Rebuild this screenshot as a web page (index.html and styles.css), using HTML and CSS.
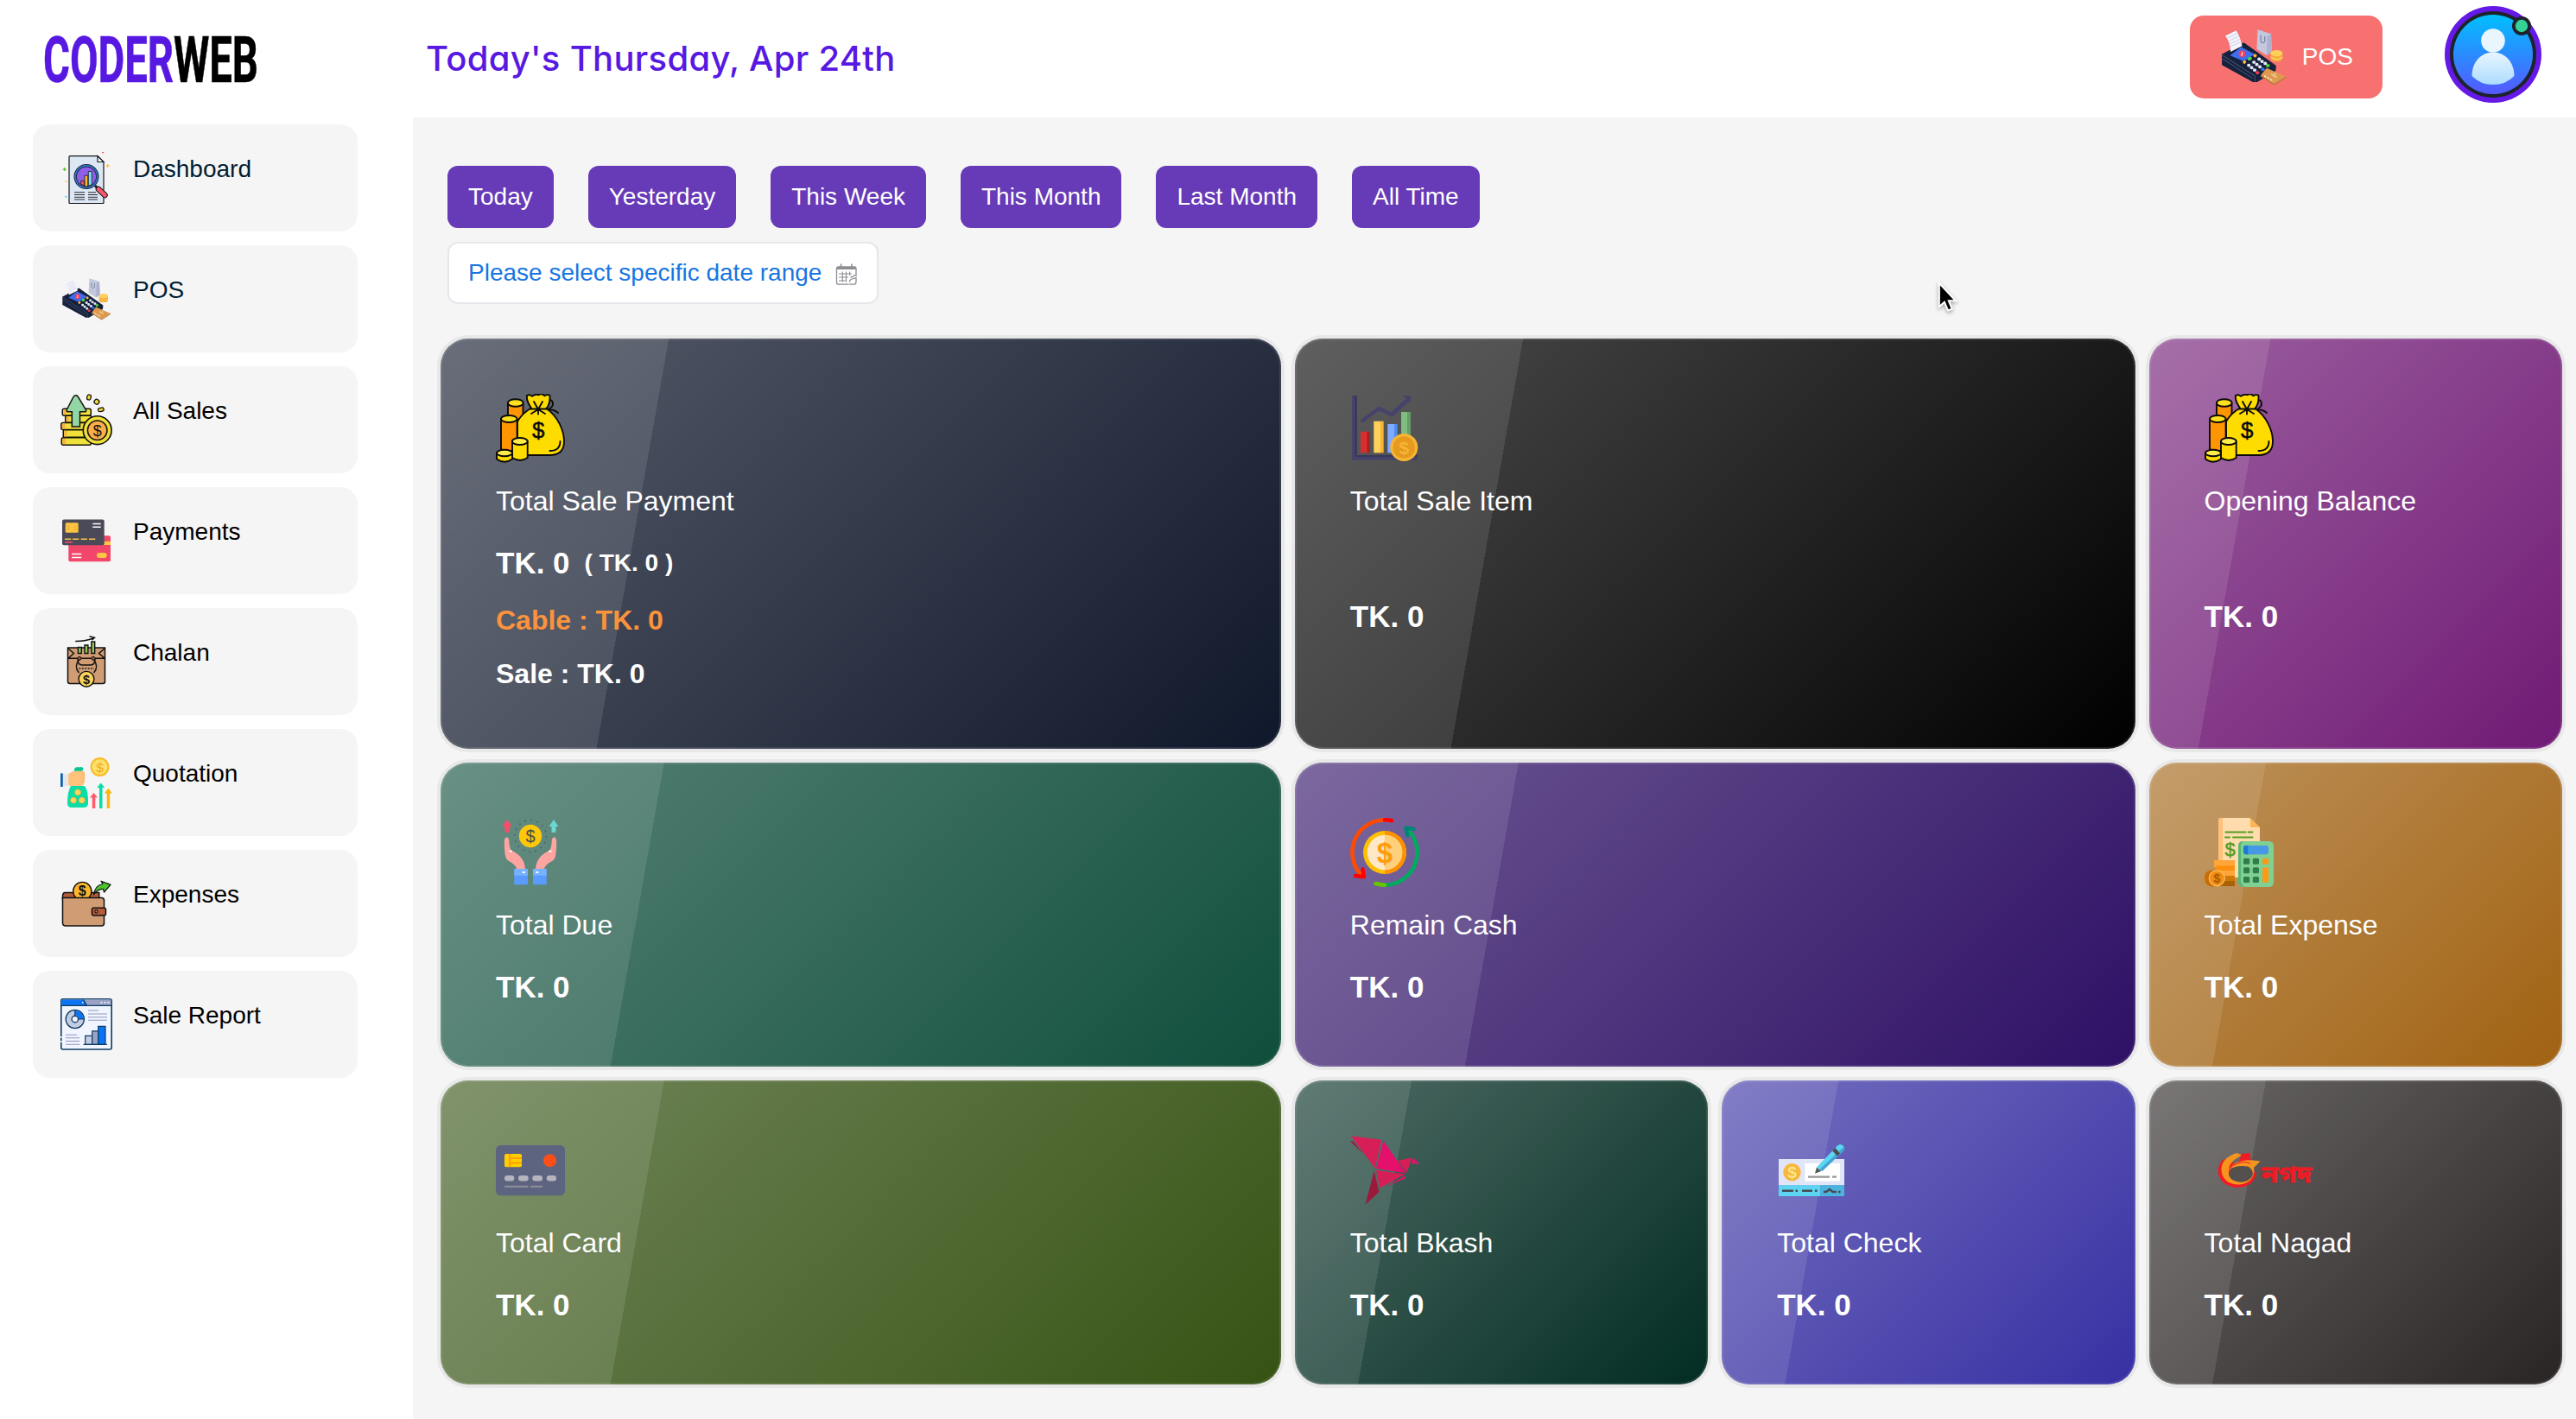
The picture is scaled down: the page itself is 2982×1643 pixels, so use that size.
FILE: index.html
```html
<!DOCTYPE html>
<html lang="en">
<head>
<meta charset="utf-8">
<title>CoderWeb Dashboard</title>
<link rel="stylesheet" href="styles.css">
</head>
<body>
<svg class="defs" width="0" height="0" aria-hidden="true">
  <symbol id="pos" viewBox="0 0 60 60">
    <path d="M33.4 6.2 45 10 45.7 25 41.2 28.5 32.6 23Z" fill="#c3c8dd"/>
    <path d="M45 10 45.7 25 41.2 28.5 41.6 12Z" fill="#adb3cf"/>
    <path d="M36 11v5.500q2 2.500 3.500 0V12" fill="none" stroke="#7b82a3" stroke-width=".9"/>
    <path d="M44.600 26.500v5a5.200 2.600 0 0 0 10.400 0v-5z" fill="#f5ab35"/>
    <ellipse cx="49.800" cy="26.800" rx="5.200" ry="2.800" fill="#ffcf5c"/>
    <path d="M44.800 30q5 4 10 0" fill="none" stroke="#ffd97a" stroke-width=".8"/>
    <path d="M2.300 27.500 21.400 17.500 49.400 37.500 49 42 33 51.700H29.200L2.300 37Z" fill="#16213c"/>
    <path d="M2.800 28.500 31 46.500 31 51M2.800 31.500 29 48.500" fill="none" stroke="#42506f" stroke-width=".8"/>
    <path d="M9.400 28.700 19.100 21.200 30.700 27.600 21.400 33.700Z" fill="#3f6df0"/>
    <circle cx="19.900" cy="27.200" r="3" fill="#f0405f"/>
    <path d="M19.900 25.500v3h-1.200" stroke="#fff" stroke-width=".7" fill="none"/>
    <path d="M5.300 11.700 14.700 7 Q18 12 19.900 20.500L9.800 25.500Q9.500 17 5.300 11.700Z" fill="#f4f4fd"/>
    <path d="M7.500 13.500 15.500 9.500M8.500 16 16.800 12M9.300 18.500 17.800 14.500M9.700 21 18.500 17" stroke="#c9cbe4" stroke-width=".7"/>
    <g stroke-width="2.800" stroke-linecap="round">
      <path d="M21.800 34.500 22 34.300M31 28.900 31.200 28.800" stroke="#ffb640"/>
      <path d="M26 31.700 27 31.200M42 37.600 42.500 37.400" stroke="#4cd43c"/>
      <path d="M25.500 37.200h.3M30 34.500h.3M34.500 31.800h.3M28 39.200h.3M32.500 36.500h.3M37 33.800h.3M30.600 41.300h.3M35.200 38.500h.3M39.800 35.600h.3" stroke="#e6e9f6"/>
      <path d="M33 43.600h.3" stroke="#ee3c55"/><path d="M37.800 40.600h.3" stroke="#3178ee"/>
    </g>
    <path d="M41.200 39.500 58 47 47.600 53.500 36 46Z" fill="#dd9a4e"/>
    <path d="M58 47 47.600 53.500 36 46v1L47.600 54.500 58 48Z" fill="#b8763a"/>
    <path d="M39 46.300 47 50.800" stroke="#fff" stroke-width=".9" stroke-dasharray="2 1"/>
    <path d="M45 44.500 50 47.800M49 43.800 47 47" stroke="#f1c98e" stroke-width="1.200"/>
  </symbol>
  <symbol id="bag" viewBox="0 0 80 80">
    <g stroke="#0a0a0a" stroke-width="1.900" stroke-linejoin="round" stroke-linecap="round">
      <path d="M14 10.500V60H31.500V10.500" fill="#ff9500"/>
      <ellipse cx="22.800" cy="10.500" rx="8.800" ry="4.300" fill="#ffe11f"/>
      <path d="M60 7c7-1 8 7 2 10M58 18.500q9-1 14 3.500" fill="none"/>
      <path d="M36 1.800q3.500-1.500 6 1 4-3 7.500-1.500 4-2.500 7 1 3-2 6-.500Q63 12 58.500 17C72 26 79 43 79 55 79 66 73 71 62 71H25V32Q31 22 41 16.500 35 8 36 1.800Z" fill="#ffdc00"/>
      <path d="M74.500 55q0 11-12 11" fill="none"/>
      <path d="M44 9 49 18 54 9M41 23 49 18 57 23M49 18v5.500M40 17.500H59" fill="none"/>
      <path d="M6 29V64Q15 69 24.600 64V29" fill="#ff9500"/>
      <ellipse cx="15.300" cy="29" rx="9.300" ry="4" fill="#ffe11f"/>
      <path d="M19 55V74Q28 80 36.700 74V55" fill="#ffdc00"/>
      <ellipse cx="27.800" cy="55" rx="8.900" ry="4" fill="#ffee4a"/>
      <path d="M1 68.500v7q9 6.500 18 0v-7" fill="#ffdc00"/>
      <ellipse cx="10" cy="68.500" rx="9" ry="3.800" fill="#ffee4a"/>
    </g>
    <text x="49.200" y="50.500" class="ico-dollar" font-size="26" fill="#0a0a0a" stroke="#0a0a0a" stroke-width=".5">$</text>
  </symbol>
</svg>

<aside class="sidebar">
  <div class="brand">
    <svg width="270" height="100" viewBox="0 0 270 100" role="img" aria-label="CODERWEB">
      <text class="brand-text" x="10" y="77" textLength="249" lengthAdjust="spacingAndGlyphs"><tspan fill="#5719e2" stroke="#5719e2">CODER</tspan><tspan fill="#000" stroke="#000">WEB</tspan></text>
    </svg>
  </div>
  <nav class="menu">
    <a class="menu-item is-navy">
      <svg class="menu-icon" viewBox="0 0 60 60">
        <path d="M11 4.700H43L50 12V58.500q0 1-1 1H11q-1 0-1-1V5.700q0-1 1-1Z" fill="#dbe7f3" stroke="#17181c" stroke-width="1.200"/>
        <path d="M43 4.700V11.500H50Z" fill="#fff" stroke="#17181c" stroke-width="1.200"/>
        <path d="M40 39 43 42" stroke="#17181c" stroke-width="3"/>
        <path d="M44 43 51.500 50" stroke="#17181c" stroke-width="6.600" stroke-linecap="round"/>
        <path d="M44 43 51.500 50" stroke="#f9556b" stroke-width="4.600" stroke-linecap="round"/>
        <circle cx="30" cy="28.600" r="12.800" fill="#8f5fe8" stroke="#17181c" stroke-width="3.400"/>
        <circle cx="30" cy="28.600" r="12.800" fill="none" stroke="#2f73c9" stroke-width="1.900"/>
        <g stroke="#17181c" stroke-width=".8"><path d="M23.700 33.500h3.800v5.500l-3.800-2z" fill="#f9556b"/><path d="M28 27.300h3.800v12.500H28z" fill="#fbb829"/><path d="M32.300 22.500h4v15l-4 2z" fill="#7fdcf2"/></g>
        <path d="M16 46.700H28M16 49.500H28M16 52.300H28M16 55H28M32 46.700H41M32 49.500H43M32 52.300H43M32 55H43" stroke="#2a2b31" stroke-width="1"/>
        <path d="M4.700 18v4M2.700 20h4" stroke="#6cc24a" stroke-width="1.500"/><path d="M54.700 14v4M52.700 16h4" stroke="#fbc252" stroke-width="1.500"/>
        <path d="M48 .6h2.200" stroke="#f9556b" stroke-width="1.300"/><path d="M5.300 34h2" stroke="#fbc252" stroke-width="1.600"/><path d="M5 51.800h2.800" stroke="#7fdcf2" stroke-width="2"/>
      </svg>
      <span>Dashboard</span>
    </a>
    <a class="menu-item is-navy"><svg class="menu-icon"><use href="#pos"/></svg><span>POS</span></a>
    <a class="menu-item">
      <svg class="menu-icon" viewBox="0 0 60 60">
        <g stroke="#15130d" stroke-width="1.500" stroke-linejoin="round" fill="#f0e03a">
          <rect x="2.300" y="17.300" width="33" height="8" rx="2"/><rect x="5.700" y="25.300" width="30" height="8" rx="1.500"/>
          <rect x=".8" y="33.500" width="34" height="8" rx="2"/><rect x="3.300" y="41.800" width="32" height="8.500" rx="1"/><rect x="1.300" y="50.700" width="34" height="8.500" rx="2"/>
        </g>
        <path d="M3.500 18.500h3v5.500h-3zM7 26.500h3v5.500H7zM2 34.500h3.500v6H2zM4.500 43h3v6.500h-3zM2.500 52h3.500v6H2.500z" fill="#fdae4b"/>
        <path d="M17.700 1.800q2 0 3 2L29.500 18.500Q30.300 20.800 28 20.800H22.500V38H13.300V20.800H8.500Q6.500 20.500 7.300 18.500L14.700 4q1-2.200 3-2.200Z" fill="#93d6a6" stroke="#15130d" stroke-width="1.500"/>
        <circle cx="42.700" cy="42.200" r="16.400" fill="#f0e03a" stroke="#15130d" stroke-width="1.600"/>
        <circle cx="42.700" cy="42.200" r="11.300" fill="#fdae4b" stroke="#15130d" stroke-width="1.500"/>
        <text x="42.700" y="48.700" class="ico-dollar" font-size="18" fill="#15130d">$</text>
        <g fill="#f0e03a" stroke="#15130d" stroke-width="1.300"><rect x="30.800" y="1" width="4.400" height="6" rx="2" transform="rotate(12 33 4)"/><rect x="39.400" y="6.500" width="5.400" height="5.400" rx="2" transform="rotate(35 42 9)"/><rect x="43.500" y="16.300" width="6.600" height="4" rx="1.900" transform="rotate(-12 47 18)"/></g>
      </svg>
      <span>All Sales</span>
    </a>
    <a class="menu-item">
      <svg class="menu-icon" viewBox="0 0 60 60">
        <rect x="9.300" y="24.300" width="48.700" height="30" rx="2" fill="#f2476a"/>
        <path d="M50 30.800H58V35H50z" fill="#fdc544"/>
        <path d="M13 45.500H24.300M13 49.600H24.300" stroke="#fff" stroke-width="1.500"/>
        <rect x="42" y="44" width="11.700" height="6" rx="3" fill="#fdc544"/>
        <rect x="2" y="5.500" width="48.700" height="29.700" rx="2" fill="#4b4a58"/>
        <rect x="5.700" y="9.200" width="15" height="11.500" rx="1.500" fill="#fdc544"/>
        <path d="M5.700 13h4.500v4H5.700M20.700 13h-4.500v4h4.500M13 9.200v2.500M13 18.500v2.200" fill="none" stroke="#e3a42f" stroke-width=".8"/>
        <path d="M37.300 10.600H46.700M37.300 14.200H46.700" stroke="#fff" stroke-width="1.500"/>
        <path d="M5 28.200H12.300M14 28.200H21.300M23.700 28.200H31M33 28.200H40.300" stroke="#fdc544" stroke-width="1.500"/>
        <path d="M5 31.800H14" stroke="#f2476a" stroke-width="1.700"/>
      </svg>
      <span>Payments</span>
    </a>
    <a class="menu-item">
      <svg class="menu-icon" viewBox="0 0 60 60">
        <path d="M8.500 14H51.500V53q0 2.500-2.500 2.500H11q-2.500 0-2.500-2.500Z" fill="#cf9c74" stroke="#111" stroke-width="1.500"/>
        <path d="M8.500 26.200H51.500M9 15 15.500 20.500 9 26M51 15 44.500 20.500 51 26" fill="none" stroke="#111" stroke-width="1.500"/>
        <g fill="#8bc65c" stroke="#111" stroke-width="1.400"><path d="M20.400 13.500h3.900v7h-3.900zM28 11h3.900v9.500H28zM35.800 7h3.900v13.500h-3.900z"/></g>
        <path d="M17.300 6.500Q30 6.500 39 2.500M33.500.8 39.500 2.300 36.500 5" fill="none" stroke="#111" stroke-width="1.400"/>
        <path d="M20 27q0 7 5 7h10q5 0 5-7M22 27q-7 9-.500 16M38 27q7 9 .500 16" fill="none" stroke="#111" stroke-width="1.500"/>
        <circle cx="22" cy="26.300" r="2" fill="#a8543c" stroke="#111"/><circle cx="38" cy="26.300" r="2" fill="#a8543c" stroke="#111"/>
        <path d="M21.500 38H39" stroke="#111" stroke-width="1.500" stroke-dasharray="1.800 1.600"/>
        <circle cx="30" cy="50.300" r="8.900" fill="#fbd35a" stroke="#111" stroke-width="1.400"/>
        <text x="30" y="55.500" class="ico-dollar ico-bold" font-size="14.500" fill="#111">$</text>
      </svg>
      <span>Chalan</span>
    </a>
    <a class="menu-item">
      <svg class="menu-icon" viewBox="0 0 60 60">
        <circle cx="45.500" cy="12" r="10.900" fill="#fbb91f"/><circle cx="45.500" cy="12" r="9" fill="#fde06b"/>
        <text x="45.500" y="17.500" class="ico-dollar" font-size="15.500" fill="#f0a818">$</text>
        <path d="M16 14q3-3 5.500-1.500 4-1.500 5 1.500-1 3-3 5.500h-5q-3-2-2.500-5.500Z" fill="#08c694"/>
        <path d="M12 34H28q4.500 6 4 20.500-.500 4.500-5 4.500H13q-5 0-5-5 0-13 4-20Z" fill="#0bdca8"/>
        <path d="M8.300 20q3 0 6-3.200h11.500q3 .5 2.300 3.400.9 2.300 0 4.300.7 2.500-.5 4.500 0 4.800-4 5H12q-3.700-1-3.700-3Z" fill="#ffc27b"/>
        <path d="M25 20.500h3M25 24.500h3M24.500 29h3" stroke="#eea45a" stroke-width=".8"/>
        <rect x="2.500" y="19.800" width="6.700" height="14.600" fill="#e4e9f1"/><rect x="0" y="19.400" width="2.800" height="15.600" fill="#1762ae"/>
        <g fill="#fdd663" stroke="#f5b82a" stroke-width="1"><circle cx="20" cy="41.400" r="3.300"/><circle cx="15" cy="50.600" r="3.300"/><circle cx="24.800" cy="50.600" r="3.300"/></g>
        <path d="M36.800 60V47.500H34L38.500 41.900 43 47.500H40.300V60Z" fill="#ff5a6e"/>
        <path d="M45 60V36H42.200L46.700 30.400 51.200 36H48.500V60Z" fill="#0bdca8"/>
        <path d="M53.700 60V42.500H50.900L55.400 36.800 59.900 42.500H57.200V60Z" fill="#fcb712"/>
      </svg>
      <span>Quotation</span>
    </a>
    <a class="menu-item">
      <svg class="menu-icon" viewBox="0 0 60 60">
        <path d="M2.500 22q0-4.500 3-4.500H44.700V25H2.500Z" fill="#b35b3c" stroke="#111" stroke-width="1.500"/>
        <circle cx="25.300" cy="16" r="10.600" fill="#fdb52c" stroke="#111" stroke-width="1.400"/>
        <text x="25.300" y="21.300" class="ico-dollar ico-bold" font-size="16" fill="#111">$</text>
        <path d="M2.500 23.500H47.500q3 0 3 3V53q0 3-3 3H6q-3.500 0-3.500-3.500Z" fill="#cf9c74" stroke="#111" stroke-width="1.500"/>
        <rect x="36.500" y="35.200" width="16" height="8.800" rx="2" fill="#b35b3c" stroke="#111" stroke-width="1.500"/><circle cx="41.500" cy="39.500" r="1.600" fill="#cf9c74" stroke="#111" stroke-width="1.100"/>
        <path d="M38.500 20Q40 9 49 7.500L47 4.200 58 8.400 50.500 17 49.500 13.500Q43 13 38.500 20Z" fill="#4ac52c" stroke="#111" stroke-width="1.200" stroke-linejoin="round"/>
      </svg>
      <span>Expenses</span>
    </a>
    <a class="menu-item">
      <svg class="menu-icon" viewBox="0 0 60 60">
        <rect x=".8" y=".8" width="58.400" height="58.200" rx="2" fill="#f1f5ff" stroke="#0e3e62" stroke-width="1.600"/>
        <path d="M1.600 1.600H26.500L30.500 8H1.600Z" fill="#0b74f5"/><path d="M26.500 1.600H58.400V8H30.500Z" fill="#9aa2c6"/>
        <path d="M.8 8.400H59.200M26.500 1.500 30.500 8.400" stroke="#0e3e62" stroke-width="1.400"/>
        <path d="M46.500 4.700h1.800M50.500 4.700h1.800M54.500 4.700h1.800M25 4.700h1.500" stroke="#fff" stroke-width="1.500"/>
        <circle cx="16.800" cy="24" r="7.200" fill="none" stroke="#0e3e62" stroke-width="8.200"/>
        <circle cx="16.800" cy="24" r="7.200" fill="none" stroke="#c4cce4" stroke-width="5.600"/>
        <path d="M16.800 16.800A7.200 7.200 0 0 1 24 24" fill="none" stroke="#0b74f5" stroke-width="5.600"/>
        <path d="M16.800 13V20.500M20.500 24H28" stroke="#0e3e62" stroke-width="1.200"/>
        <path d="M32 14H44M32 18H54M32 21.700H54M32 25.300H54M6 42.300H19M6 45.800H22.300M6 49.500H22.300M6 53.200H22.300" stroke="#8f97bd" stroke-width="1.100"/>
        <g stroke="#0e3e62" stroke-width="1.200"><path d="M28.700 43.300h8V53.400h-8z" fill="#c4cce4"/><path d="M36.700 37.800h7V53.400h-7z" fill="#9aa2c6"/><path d="M43.700 32.300H52V53.400h-8.300z" fill="#0b74f5"/><path d="M26.500 53.400H54"/></g>
        <path d="M0 45h2M0 50h2" stroke="#f5f5f5" stroke-width="1.500"/>
      </svg>
      <span>Sale Report</span>
    </a>
  </nav>
</aside>

<main class="main">
  <header class="topbar">
    <h1 class="today">Today's Thursday, Apr 24th</h1>
    <a class="pos-btn"><svg class="pos-icon"><use href="#pos"/></svg><span>POS</span></a>
    <svg class="avatar" viewBox="0 0 112 112">
      <defs>
        <linearGradient id="sky" x1="0" y1="0" x2="0" y2="1"><stop offset="0" stop-color="#00c0ff"/><stop offset="1" stop-color="#5558ff"/></linearGradient>
        <linearGradient id="body" x1="0" y1="0" x2="0" y2="1"><stop offset="0" stop-color="#e8f5ff"/><stop offset="1" stop-color="#addcff"/></linearGradient>
      </defs>
      <circle cx="56" cy="56" r="56" fill="#6419e6"/><circle cx="56" cy="56" r="50" fill="#1d232a"/>
      <circle cx="56" cy="56" r="46" fill="url(#sky)"/>
      <circle cx="56" cy="40" r="13.800" fill="#e9f6ff"/>
      <path d="M56 53.500C70 53.500 80.500 65 80.500 81Q71 91 56 91 41 91 31.500 81C31.500 65 42 53.500 56 53.500Z" fill="url(#body)"/>
      <circle cx="89" cy="23" r="11" fill="#1d232a"/><circle cx="89" cy="23" r="7.200" fill="#36d399"/>
    </svg>
  </header>

  <section class="content">
    <div class="filters">
      <button class="chip">Today</button><button class="chip">Yesterday</button><button class="chip">This Week</button><button class="chip">This Month</button><button class="chip">Last Month</button><button class="chip">All Time</button>
    </div>
    <div class="range">
      <span>Please select specific date range</span>
      <svg class="range-icon" viewBox="0 0 26 26" fill="none" stroke="#8b8d92" stroke-width="1.300">
        <path d="M24 15V6q0-2-2-2H3.500q-2 0-2 2V22q0 2.200 2 2.200H15"/><path d="M2 5.500H23.500" stroke-width="3"/><path d="M6.500 .5V5M19 .5V5" stroke-width="1.600"/>
        <path d="M4 12H19M4 16H15M4 20H13M8.300 9.500v12M12.500 9.500v12M16.700 9.500v4.500" stroke-width="1.100"/><path d="M17.500 16q4-.5 5.500-3M15.500 24.200h6.500q2-.3 2-2.500v-5l-6 1.800-2 3"/>
      </svg>
    </div>

    <div class="cards">
      <article class="card wide c-slate">
        <svg class="icon"><use href="#bag"/></svg>
        <h2>Total Sale Payment</h2>
        <p class="amount">TK. 0 <small>( TK. 0 )</small></p>
        <p class="sub cable">Cable : TK. 0</p>
        <p class="sub">Sale : TK. 0</p>
      </article>
      <article class="card wide c-black">
        <svg class="icon" viewBox="0 0 80 80">
          <path d="M2 2H7.700V71H78V76.700H2Z" fill="#45436a"/><path d="M5.500 2H7.700V71H78V73H5.500Z" fill="#38365a"/>
          <path d="M13 32 33.300 17 48 24 67 6.500" fill="none" stroke="#45436a" stroke-width="4.500"/><path d="M60.500 2H70V11Z" fill="#45436a"/>
          <path d="M12 43.700h8v24.600h-8z" fill="#d72f2f"/><path d="M19.500 43.700h3.200v24.600h-3.200z" fill="#ac1f20"/>
          <path d="M27.300 31.700h8v36.600h-8z" fill="#ffd15c"/><path d="M35 31.700h3.700v36.600H35z" fill="#f8b52f"/>
          <path d="M43.300 35h8v33.300h-8z" fill="#7faaff"/><path d="M51 35h3.700v33.300H51z" fill="#4f8df0"/>
          <path d="M59 21h7.500v35H59z" fill="#80bd80"/><path d="M66 21h4v35h-4z" fill="#659e68"/>
          <circle cx="62.300" cy="62" r="16" fill="#f8b534"/><circle cx="62.300" cy="62" r="12.800" fill="#e69b1e"/>
          <text x="62.300" y="69.500" class="ico-dollar ico-bold" font-size="21" fill="#f8b534">$</text>
        </svg>
        <h2>Total Sale Item</h2>
        <p class="amount centered">TK. 0</p>
      </article>
      <article class="card c-fuchsia">
        <svg class="icon"><use href="#bag"/></svg>
        <h2>Opening Balance</h2>
        <p class="amount centered">TK. 0</p>
      </article>

      <article class="card wide c-emerald">
        <svg class="icon" viewBox="0 0 80 80">
          <circle cx="40" cy="21" r="18.300" fill="none" stroke="#4c5b68" stroke-width="1.600" stroke-dasharray="1.600 5.580"/>
          <circle cx="40" cy="21" r="13.200" fill="#fdc70c"/>
          <text x="40" y="28" class="ico-dollar" font-size="20" fill="#45504e">$</text>
          <path d="M13 2 18.500 10H15.500V16.700H10.500V10H7.500Z" fill="#ff4b6b"/><path d="M67 2 72.500 10H69.500V16.700H64.500V10H61.500Z" fill="#69d8d3"/>
          <path d="M10 25.500q1-4 3.500-3 2 1 2 8l1.700 7Q33 44 34 59H24q-1-5-9-9-4-2.500-4.500-9Q9.500 31 10 25.500Z" fill="#ffa5a1"/>
          <path d="M70 25.500q-1-4-3.500-3-2 1-2 8l-1.700 7Q47 44 46 59H56q1-5 9-9 4-2.500 4.500-9Q70.500 31 70 25.500Z" fill="#ffa5a1"/>
          <path d="M16.500 38.500h1.500M62 38.500h1.500" stroke="#fff" stroke-width="2" stroke-linecap="round"/>
          <path d="M21.300 59H37V77.300H21.300zM43 59H58.700V77.300H43z" fill="#5a9bff"/><path d="M21.300 59H37V66.800H21.300zM43 59H58.700V66.800H43z" fill="#77b2ff"/>
          <path d="M31.500 63h1.500M47 63h1.500" stroke="#fff" stroke-width="2" stroke-linecap="round"/>
        </svg>
        <h2>Total Due</h2>
        <p class="amount">TK. 0</p>
      </article>
      <article class="card wide c-violet">
        <svg class="icon" viewBox="0 0 80 80" fill="none">
          <path d="M40 2.300A37.700 37.700 0 0 0 13.500 66.700" stroke="#ff4b00" stroke-width="4.600"/>
          <path d="M40 2.300Q45 2.300 48.300 3.200" stroke="#f00" stroke-width="4.600" stroke-linecap="round"/>
          <path d="M6 67 15.800 68.300 14.600 59.500" stroke="#f00" stroke-width="4.400" stroke-linecap="round" stroke-linejoin="round"/>
          <path d="M40 77.700A37.700 37.700 0 0 0 66.500 13.300" stroke="#00ab5e" stroke-width="4.600"/>
          <path d="M40 77.700Q34 77.300 29.500 76" stroke="#67c500" stroke-width="4.600" stroke-linecap="round"/>
          <path d="M73.500 13 64.500 11.500 66 20" stroke="#008577" stroke-width="4.400" stroke-linecap="round" stroke-linejoin="round"/>
          <circle cx="40" cy="40" r="25" fill="#fdbf00"/><path d="M40 15A25 25 0 0 1 40 65Z" fill="#ff9100"/>
          <circle cx="40" cy="40" r="20.300" fill="#ffe8c8"/><path d="M40 19.700A20.300 20.300 0 0 1 40 60.300Z" fill="#ffd07b"/>
          <text x="40" y="51.500" class="ico-dollar ico-bold" font-size="33" fill="#ff9d0c">$</text>
        </svg>
        <h2>Remain Cash</h2>
        <p class="amount">TK. 0</p>
      </article>
      <article class="card c-yellow">
        <svg class="icon" viewBox="0 0 80 80">
          <path d="M19 0H52L64 11V66q0 3-3 3H16V3q0-3 3-3Z" fill="#ffdcae"/><path d="M19 0h3q-1 1-1 4v65h-5V3q0-3 3-3Z" fill="#ffc07a"/><path d="M53 0 64 11H53Z" fill="#ffb457"/>
          <path d="M24.500 16.500H47.500M50.500 16.500H55.500M24 22.500H29M33 22.500H55.500" stroke="#549e24" stroke-width="2" stroke-linecap="round"/>
          <text x="29.500" y="43.500" class="ico-dollar" font-size="22" fill="#549e24" stroke="#549e24" stroke-width=".5">$</text>
          <path d="M11 49H35V57H11z" fill="#ffa53a"/><path d="M13 55.500H35V61.500H13z" fill="#fb8f0e"/><path d="M18 61H35V67H18z" fill="#ffa53a"/><path d="M20 67H35V73H20z" fill="#cf7a08"/><path d="M8 73H35V79H12z" fill="#aa6207"/>
          <path d="M0 69.500Q0 60.500 9 60.500h5v19H9Q0 78.500 0 69.500Z" fill="#c86d04"/>
          <circle cx="14.300" cy="69.800" r="8.900" fill="#f08c11" stroke="#ffb95b" stroke-width="1.500"/>
          <text x="14.300" y="75" class="ico-dollar ico-bold" font-size="14" fill="#a85b05">$</text>
          <rect x="39" y="27" width="41" height="53" rx="5.500" fill="#80cf93"/><path d="M44.500 27Q42 29 42 33V72q0 6 5 8h-2.500q-5.500-.500-5.500-6V33q0-6 5.500-6Z" fill="#57b873"/>
          <rect x="45" y="32" width="29" height="10.300" rx="3" fill="#4498e4"/><path d="M48 32h3q-2 5 0 10.300h-3q-3-.3-3-3v-4.300q0-3 3-3Z" fill="#1c7ad0"/>
          <g fill="#2d7e48"><rect x="45" y="46.800" width="7.200" height="7" rx="1.500"/><rect x="55.800" y="46.800" width="7.200" height="7" rx="1.500"/><rect x="45" y="57.300" width="7.200" height="7" rx="1.500"/><rect x="55.800" y="57.300" width="7.200" height="7" rx="1.500"/><rect x="45" y="68" width="7.200" height="7" rx="1.500"/><rect x="55.800" y="68" width="7.200" height="7" rx="1.500"/></g>
          <rect x="67" y="46.800" width="7.200" height="7" rx="1.500" fill="#fa9b17"/><rect x="67" y="57.300" width="7.200" height="17.500" rx="1.500" fill="#fa9b17"/>
        </svg>
        <h2>Total Expense</h2>
        <p class="amount">TK. 0</p>
      </article>

      <article class="card wide c-lime">
        <svg class="icon" viewBox="0 0 80 80">
          <rect y="11" width="80" height="58.300" rx="5.500" fill="#5d6480"/>
          <rect x="10" y="21" width="20" height="15.300" rx="2" fill="#ffd000"/><path d="M16 21V36.300M17 26H30M17 31.500H30" stroke="#ff9f00" stroke-width="2.200"/>
          <circle cx="62.500" cy="28.700" r="7.500" fill="#ff4f18"/>
          <g fill="#b6b4be"><rect x="10" y="46" width="11.300" height="6.500" rx="3.200"/><rect x="26" y="46" width="11.700" height="6.500" rx="3.200"/><rect x="42.300" y="46" width="11.700" height="6.500" rx="3.200"/><rect x="58.700" y="46" width="11.300" height="6.500" rx="3.200"/></g>
          <path d="M10 58.800H37.700M40 58.800H54" stroke="#8d8a99" stroke-width="2.200"/>
        </svg>
        <h2>Total Card</h2>
        <p class="amount">TK. 0</p>
      </article>
      <article class="card c-pine">
        <svg class="icon" viewBox="0 0 80 80">
          <path d="M1 .3 36.300 4.700 28.700 37.500Z" fill="#d61f57"/><path d="M0 6.200 4 6.700 15 21Z" fill="#9b1a3b"/>
          <path d="M38.500 5.700 64 43.300 30 38Z" fill="#e4106c"/><path d="M30 40 63.700 44.600 34.200 60.400Z" fill="#d61f57"/>
          <path d="M27.800 40.700 33.300 65.300 17.500 79.800Z" fill="#9b1a3b"/>
          <path d="M55 28.900 71.300 25.200 65.500 43Z" fill="#d61f57"/><path d="M73.200 25.400 80 32.500H70.500Z" fill="#e4106c"/><path d="M64 46.500 63.500 49.500 39.700 59.400Z" fill="#e4106c"/>
        </svg>
        <h2>Total Bkash</h2>
        <p class="amount">TK. 0</p>
      </article>
      <article class="card c-indigo">
        <svg class="icon" viewBox="0 0 80 80">
          <path d="M2 27H78V57.500H2z" fill="#e0e6f7"/><path d="M2 57.200H50V70H2z" fill="#5cd4f2"/><path d="M50 57.200H78V70H50z" fill="#4cb2df"/>
          <path d="M32.500 32H73V52.700H32.500z" fill="#fff"/>
          <circle cx="17.500" cy="42.300" r="10.300" fill="#f8b83f"/><text x="17.500" y="49.300" class="ico-dollar ico-bold" font-size="19" fill="#fde382">$</text>
          <path d="M36 47.600H61M64 47.600H69" stroke="#969799" stroke-width="2.400"/>
          <path d="M6 63.700H19M21.500 63.700H24M29 63.700H41M44 63.700H46.500M54 65h3l4-3 3.500 3H69M71 65h2.500" fill="none" stroke="#454b50" stroke-width="2.400"/>
          <path d="M44 43.700 46 36.500 51.500 41Z" fill="#56575c"/>
          <path d="M46 36.500 70 11.500Q73.500 8.500 76.500 11.500 79.500 14 77 17.500L52.500 41Z" fill="#5cd4f2"/><path d="M49.500 39 77.800 12.500Q79.500 14.500 77 17.500L52.500 41Z" fill="#43a6d2"/>
          <path d="M67.500 14 73 20.500 69.800 23.500 64.200 17.500Z" fill="#4b4c50"/>
        </svg>
        <h2>Total Check</h2>
        <p class="amount">TK. 0</p>
      </article>
      <article class="card c-stone">
        <svg class="icon nagad" viewBox="0 0 140 80">
          <path d="M22 27Q15.700 33 15.700 41C15.700 52 26 60 38.500 60 51 60 59.500 52 60 42Z" fill="#ee1c25"/>
          <path d="M37 20Q19 26 19.500 40C20 50 28 56.500 39 56.500 51 56.500 59 48 57 37L64.500 29.500 51.500 28Q37 27 28 39 29 29 44 22.500Z" fill="#f7941d"/>
          <path d="M50 35.500A14 10 0 1 1 29.500 39Q37 33.500 50 35.500Z" fill="#53504e"/>
          <path d="M40.500 29 42.500 21 52.500 20 53.500 28.500Q44 27.500 35 33Z" fill="#ee1c25"/>
          <path d="M28.500 45Q28 36 37 32.500T53 32" fill="none" stroke="#ee1c25" stroke-width="1"/>
          <text class="nagad-word" x="66" y="54" textLength="58" lengthAdjust="spacingAndGlyphs" fill="#ee1c25" stroke="#ee1c25" stroke-width=".8">নগদ</text>
        </svg>
        <h2>Total Nagad</h2>
        <p class="amount">TK. 0</p>
      </article>
    </div>
  </section>
  <svg class="pointer" width="28" height="41" viewBox="0 0 30 44"><path d="M3 2V31.500L9.500 25.500 14 36 19 34 14.800 23.800H23.500Z" fill="#000" stroke="#fff" stroke-width="2.200"/></svg>
</main>
</body>
</html>
```

FILE: styles.css
```css
* { box-sizing: border-box; }
body {
  margin: 0;
  display: flex;
  min-height: 1643px;
  background: #fff;
  color: #000;
  font-family: "Liberation Sans", Arial, sans-serif;
  font-size: 28px;
}
h1, h2, p { margin: 0; font-weight: 400; }
svg { display: block; flex: none; }
.defs { position: absolute; }
.ico-dollar { font-family: "Liberation Sans", Arial, sans-serif; text-anchor: middle; }
.ico-bold { font-weight: 700; }

/* Sidebar */
.sidebar { flex: none; width: 478px; padding: 0 64px 0 38px; }
.brand { height: 144px; padding: 18px 0 0 2px; }
.brand-text { font-family: Roboto, sans-serif; font-weight: 700; font-size: 75px; stroke-width: .6; }
.menu { display: flex; flex-direction: column; gap: 16px; }
.menu-item {
  display: flex;
  align-items: flex-start;
  gap: 24px;
  height: 124px;
  padding: 32px;
  border-radius: 20px;
  background: #f5f5f5;
  line-height: 40px;
}
.is-navy { color: #001e33; }
.menu-icon { width: 60px; height: 60px; }

/* Header */
.main { flex: 1; min-width: 0; display: flex; flex-direction: column; position: relative; }
.topbar { display: flex; align-items: flex-start; height: 136px; padding: 0 40px 0 15px; }
.today {
  margin: 38px auto 0 0;
  font-family: Inter, sans-serif;
  font-feature-settings: "cv11";
  font-weight: 500;
  font-size: 40px;
  line-height: 60px;
  letter-spacing: 0.3px;
  color: #5719e2;
}
.pos-btn {
  display: flex;
  align-items: center;
  gap: 16px;
  height: 96px;
  margin-top: 18px;
  padding: 0 34px;
  border-radius: 16px;
  background: #f87171;
  color: #fff;
}
.pos-icon { width: 80px; height: 80px; }
.avatar { width: 112px; height: 112px; margin: 7px 0 0 72px; }

/* Content */
.content { flex: 1; padding: 56px 16px 40px 32px; background: #f5f5f5; }
.filters { display: flex; gap: 40px; padding-left: 8px; }
.chip {
  height: 72px;
  padding: 0 24px;
  border: 0;
  border-radius: 12px;
  background: #673ab7;
  color: #fff;
  font: inherit;
}
.range {
  display: flex;
  align-items: center;
  gap: 16px;
  width: 499px;
  height: 72px;
  margin: 16px 0 40px 8px;
  padding: 0 22px;
  border: 2px solid #e5e7eb;
  border-radius: 12px;
  background: #fff;
  color: #1976e0;
  white-space: nowrap;
}
.range-icon { width: 26px; height: 26px; margin-top: 4px; }

/* Glass cards */
.cards {
  display: grid;
  grid-template-columns: repeat(5, minmax(0, 1fr));
  grid-template-rows: 475px 352px 352px;
  gap: 16px;
}
.card {
  display: flex;
  flex-direction: column;
  padding: 64px;
  border-radius: 32px;
  color: #fff;
  background-image:
    linear-gradient(135deg, rgb(255 255 255 / 30%) 0%, rgb(0 0 0 / 0%) 100%),
    linear-gradient(100deg, rgb(255 255 255 / 10%) 25%, rgb(0 0 0 / 0%) 25%);
  box-shadow: 0 0 0 2px rgb(255 255 255 / 10%) inset, 0 0 0 4px rgb(0 0 0 / 5%);
  text-shadow: 0 2px rgb(0 0 0 / 5%);
}
.wide { grid-column: span 2; }
.icon { width: 80px; height: 80px; }
.nagad { width: 140px; }
.nagad-word { font-family: "Noto Sans Bengali", "Noto Sans", sans-serif; font-weight: 700; font-size: 26px; }
.card h2 { margin-top: 16px; font-size: 32px; line-height: 56px; }
.amount { display: flex; align-items: center; gap: 17px; margin-top: 16px; font-size: 35px; font-weight: 700; line-height: 56px; }
.amount small { font-size: 28px; }
.centered { flex: 1; }
.sub { margin-top: 16px; font-size: 32px; font-weight: 700; line-height: 45.5px; }
.cable { color: #fb923c; }
.c-slate { background-color: #0f172a; }
.c-black { background-color: #000; }
.c-fuchsia { background-color: #701a75; }
.c-emerald { background-color: #104e3c; }
.c-violet { background-color: #2e1065; }
.c-yellow { background-color: #a16212; }
.c-lime { background-color: #365314; }
.c-pine { background-color: #022c22; }
.c-indigo { background-color: #3730a3; }
.c-stone { background-color: #292524; }

/* Mouse pointer over the page */
.pointer { position: absolute; left: 1764px; top: 326px; filter: drop-shadow(0 2px 2px rgb(0 0 0 / 35%)); }
```
